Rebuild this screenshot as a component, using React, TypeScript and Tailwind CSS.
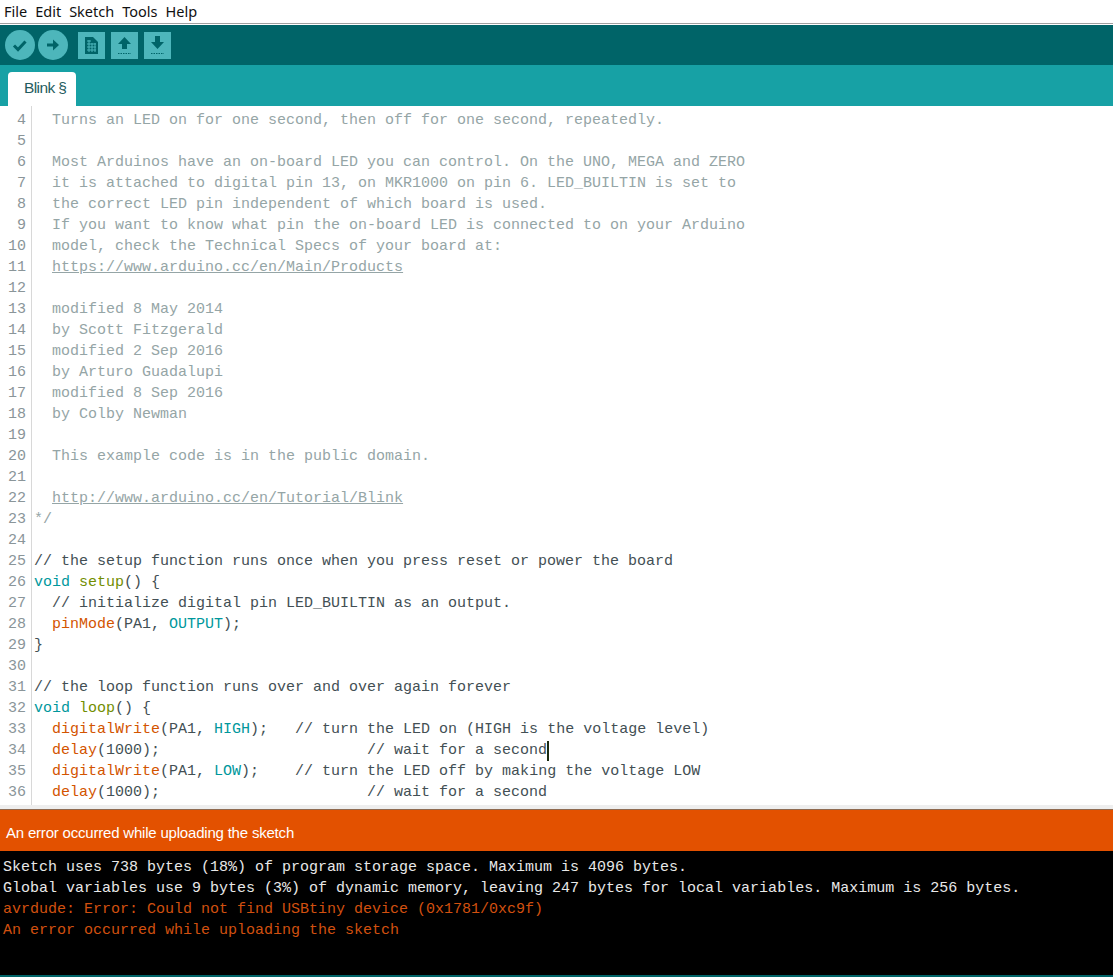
const comment = "text-[#95a5a6]";
const plain = "text-[#434f54]";
const fn = "text-[#d35400]";
const kw = "text-[#00979c]";
const type = "text-[#728e00]";

type Seg = { t: string; c?: string; u?: boolean };
type Line = { n: number; segs: Seg[] };

const c = (t: string): Seg[] => [{ t, c: comment }];
const g = (t: string): Seg[] => [{ t, c: plain }];

const lines: Line[] = [
  { n: 4, segs: c("  Turns an LED on for one second, then off for one second, repeatedly.") },
  { n: 5, segs: [] },
  { n: 6, segs: c("  Most Arduinos have an on-board LED you can control. On the UNO, MEGA and ZERO") },
  { n: 7, segs: c("  it is attached to digital pin 13, on MKR1000 on pin 6. LED_BUILTIN is set to") },
  { n: 8, segs: c("  the correct LED pin independent of which board is used.") },
  { n: 9, segs: c("  If you want to know what pin the on-board LED is connected to on your Arduino") },
  { n: 10, segs: c("  model, check the Technical Specs of your board at:") },
  { n: 11, segs: [{ t: "  ", c: comment }, { t: "https://www.arduino.cc/en/Main/Products", c: comment, u: true }] },
  { n: 12, segs: [] },
  { n: 13, segs: c("  modified 8 May 2014") },
  { n: 14, segs: c("  by Scott Fitzgerald") },
  { n: 15, segs: c("  modified 2 Sep 2016") },
  { n: 16, segs: c("  by Arturo Guadalupi") },
  { n: 17, segs: c("  modified 8 Sep 2016") },
  { n: 18, segs: c("  by Colby Newman") },
  { n: 19, segs: [] },
  { n: 20, segs: c("  This example code is in the public domain.") },
  { n: 21, segs: [] },
  { n: 22, segs: [{ t: "  ", c: comment }, { t: "http://www.arduino.cc/en/Tutorial/Blink", c: comment, u: true }] },
  { n: 23, segs: c("*/") },
  { n: 24, segs: [] },
  { n: 25, segs: g("// the setup function runs once when you press reset or power the board") },
  { n: 26, segs: [{ t: "void", c: kw }, { t: " ", c: plain }, { t: "setup", c: type }, { t: "() {", c: plain }] },
  { n: 27, segs: g("  // initialize digital pin LED_BUILTIN as an output.") },
  { n: 28, segs: [{ t: "  ", c: plain }, { t: "pinMode", c: fn }, { t: "(PA1, ", c: plain }, { t: "OUTPUT", c: kw }, { t: ");", c: plain }] },
  { n: 29, segs: g("}") },
  { n: 30, segs: [] },
  { n: 31, segs: g("// the loop function runs over and over again forever") },
  { n: 32, segs: [{ t: "void", c: kw }, { t: " ", c: plain }, { t: "loop", c: type }, { t: "() {", c: plain }] },
  { n: 33, segs: [{ t: "  ", c: plain }, { t: "digitalWrite", c: fn }, { t: "(PA1, ", c: plain }, { t: "HIGH", c: kw }, { t: ");   // turn the LED on (HIGH is the voltage level)", c: plain }] },
  { n: 34, segs: [{ t: "  ", c: plain }, { t: "delay", c: fn }, { t: "(1000);                       // wait for a second", c: plain }] },
  { n: 35, segs: [{ t: "  ", c: plain }, { t: "digitalWrite", c: fn }, { t: "(PA1, ", c: plain }, { t: "LOW", c: kw }, { t: ");    // turn the LED off by making the voltage LOW", c: plain }] },
  { n: 36, segs: [{ t: "  ", c: plain }, { t: "delay", c: fn }, { t: "(1000);                       // wait for a second", c: plain }] },
];

const console_lines = [
  { t: "Sketch uses 738 bytes (18%) of program storage space. Maximum is 4096 bytes.", c: "text-[#e8e8e8]" },
  { t: "Global variables use 9 bytes (3%) of dynamic memory, leaving 247 bytes for local variables. Maximum is 256 bytes.", c: "text-[#e8e8e8]" },
  { t: "avrdude: Error: Could not find USBtiny device (0x1781/0xc9f)", c: "text-[#d2500f]" },
  { t: "An error occurred while uploading the sketch", c: "text-[#d2500f]" },
];

function RoundButton({ children }: { children: React.ReactNode }) {
  return (
    <div className="w-[30px] h-[30px] rounded-full bg-[#4db6bb] flex items-center justify-center">
      <svg width="30" height="30" viewBox="0 0 30 30" fill="none">{children}</svg>
    </div>
  );
}

function SquareButton({ children }: { children: React.ReactNode }) {
  return (
    <div className="w-[27px] h-[27px] bg-[#4db6bb] flex items-center justify-center">
      <svg width="27" height="27" viewBox="0 0 27 27" fill="none">{children}</svg>
    </div>
  );
}

export default function App() {
  return (
    <div className="w-[1113px] h-[977px] overflow-hidden flex flex-col bg-white">
      {/* menu bar */}
      <div className="h-[23px] flex items-center gap-[8px] pl-1 text-[14.5px] text-[#111] font-['Noto_Sans',sans-serif] bg-white">
        <span>File</span>
        <span>Edit</span>
        <span>Sketch</span>
        <span>Tools</span>
        <span>Help</span>
      </div>
      <div className="h-[1px] bg-[#a0a0a0]" />
      <div className="h-[1px] bg-white" />

      {/* toolbar */}
      <div className="h-[40px] bg-[#006468] flex items-center pl-[5px]">
        <RoundButton>
          <path d="M9 15.5l4 4 7.5-8" stroke="#006468" strokeWidth="3" />
        </RoundButton>
        <div className="ml-[3px]">
          <RoundButton>
            <path d="M9 15h9" stroke="#006468" strokeWidth="3" />
            <path d="M15 9.5l6 5.5-6 5.5z" fill="#006468" />
          </RoundButton>
        </div>
        <div className="ml-[10px] flex gap-[6px]">
          <SquareButton>
            <path d="M7 5h8l5 5v12H7z" fill="#006468" />
            <path d="M9 9h4M9 12h9M9 15h9M9 18h9M11 8v12M14 11v9M17 11v9" stroke="#4db6bb" strokeWidth="1" />
          </SquareButton>
          <SquareButton>
            <path d="M13.5 5l6.5 7h-4v5h-5v-5H7z" fill="#006468" />
            <path d="M7 21.5h13" stroke="#006468" strokeWidth="1" strokeDasharray="1.5 1" />
          </SquareButton>
          <SquareButton>
            <path d="M11 4h5v6h4l-6.5 7L7 10h4z" fill="#006468" />
            <path d="M7 21.5h13" stroke="#006468" strokeWidth="1" strokeDasharray="1.5 1" />
          </SquareButton>
        </div>
      </div>

      {/* tabs */}
      <div className="h-[41px] bg-[#17a1a5] flex items-end pl-2">
        <div className="w-[68px] h-[34px] bg-white rounded-t-[4px] flex items-center pl-4 pb-[3px] text-[15.5px] text-[#1f5c60] tracking-[-0.6px] font-['Liberation_Sans',sans-serif]">
          Blink §
        </div>
      </div>

      {/* editor */}
      <div className="h-[699px] overflow-hidden flex bg-white font-['Liberation_Mono',monospace] text-[15px] leading-[21px]">
        <div className="w-[32px] shrink-0 pt-[4px] border-r border-[#d8d8d8] text-right pr-[5px] text-[#8a9599]">
          {lines.map((l) => (
            <div key={l.n} className="h-[21px]">{l.n}</div>
          ))}
        </div>
        <div className="pl-[2px] pt-[4px] whitespace-pre">
          {lines.map((l) => (
            <div key={l.n} className="h-[21px]">
              {l.segs.map((s, i) => (
                <span key={i} className={(s.c ?? "") + (s.u ? " underline" : "")}>{s.t}</span>
              ))}
              {/* caret sits over the line, must not change its height */}
              {l.n === 34 && (
                <span className="relative">
                  <span className="absolute left-0 -top-[1px] w-[2px] h-[20px] bg-[#1a2a10]" />
                </span>
              )}
            </div>
          ))}
        </div>
      </div>

      {/* status */}
      <div className="h-[4px] bg-[#eeeeee]" />
      <div className="h-[42px] bg-[#e35100] flex items-center pl-[6px] pt-[5px] text-[15px] text-white tracking-[-0.2px] font-['Liberation_Sans',sans-serif] border-t border-[#8f6a50]">
        An error occurred while uploading the sketch
      </div>

      {/* console */}
      <div className="flex-1 bg-black pt-[6px] pl-[3px] font-['Liberation_Mono',monospace] text-[15px] leading-[21px] whitespace-pre">
        {console_lines.map((l, i) => (
          <div key={i} className={l.c}>{l.t}</div>
        ))}
      </div>
      <div className="h-[2px] bg-[#006468]" />
    </div>
  );
}
